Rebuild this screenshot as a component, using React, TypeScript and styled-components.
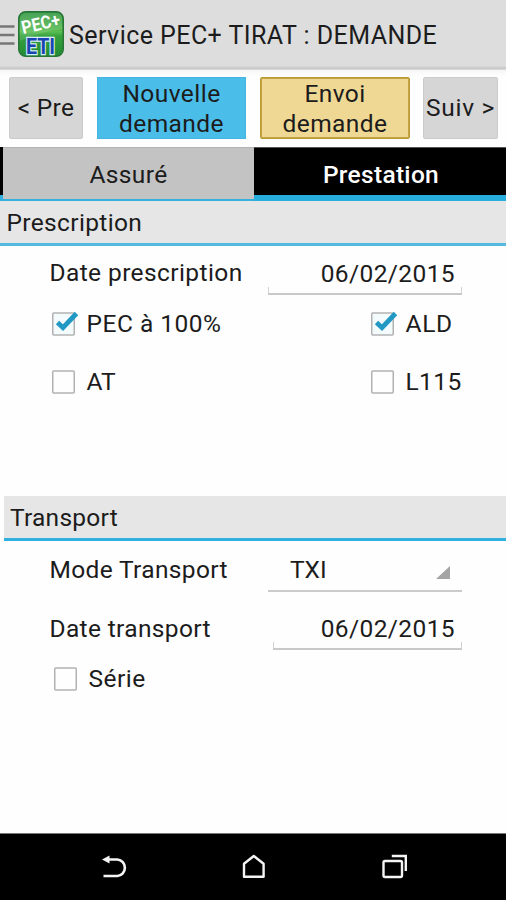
import React from 'react';
import styled, { createGlobalStyle, css } from 'styled-components';

const GlobalStyle = createGlobalStyle`
  * { box-sizing: border-box; }
  body { margin: 0; background: #fefefe; }
  button { font: inherit; color: inherit; margin: 0; }
`;

const Screen = styled.div`
  width: 506px;
  height: 900px;
  display: flex;
  flex-direction: column;
  overflow: hidden;
  background: #fefefe;
  color: #1c1c1c;
  font-family: Roboto, sans-serif;
  font-size: 24.5px;
  line-height: 30px;
  white-space: nowrap;
`;

const AppBar = styled.header`
  display: flex;
  align-items: center;
  flex: none;
  height: 70px;
  background: linear-gradient(#dddddd 66px, #cfcfcf 67px, #c9c9c9 69px, #e6e6e6 70px);
`;

const MenuIcon = styled.svg`
  display: block;
  flex: none;
  margin-right: 3px;
`;

const Logo = styled.svg`
  display: block;
  flex: none;
  margin-top: -2px;
  overflow: visible;
`;

const Text = styled.span<{ $spacing?: number }>`
  letter-spacing: ${({ $spacing = 0 }) => $spacing}px;
`;

const Title = styled.h1`
  margin: 1px 0 0 5px;
  font-size: 25px;
  font-weight: 400;
  letter-spacing: 0.44px;
`;

const Toolbar = styled.div`
  display: flex;
  flex: none;
  height: 77px;
  padding: 7px 8px 8px 9px;
  background: linear-gradient(#f6f6f6, #fefefe 6px);
`;

const ToolButton = styled.button<{ $tone?: 'blue' | 'gold'; $width: number; $gap?: number }>`
  flex: none;
  width: ${({ $width }) => $width}px;
  height: 62px;
  margin-left: ${({ $gap = 0 }) => $gap}px;
  padding: 0;
  border: 1px solid #cbcbcb;
  border-radius: 2px;
  background: #d6d6d6;
  white-space: normal;
  ${({ $tone }) => $tone === 'blue' && css`
    padding-top: 1px;
    background: #4abde8;
    border-color: #45b4df;
    border-radius: 0;
  `}
  ${({ $tone }) => $tone === 'gold' && css`
    padding-top: 1px;
    background: #eed894;
    border: 1px solid #b99a35;
    box-shadow: inset 0 0 0 1px #c2a443;
  `}
`;

const Tabs = styled.div`
  display: flex;
  flex: none;
  height: 54px;
  padding-left: 3px;
  background: linear-gradient(#000 0 48px, #2fb0dd 48px) no-repeat 0 0 / 3px 100%;
`;

const Tab = styled.button<{ $active?: boolean }>`
  flex: ${({ $active }) => ($active ? '1' : '0 0 251px')};
  padding: 4px 0 0;
  border: solid #36b0de;
  border-width: 0 0 2px;
  background: #c3c3c3;
  box-shadow: inset 0 1px #b4b4b4;
  ${({ $active }) => $active && css`
    background: #000;
    color: #fff;
    font-weight: 500;
    border-color: #27aedd;
    border-width: 0 0 6px;
    padding: 8px 0 0 2px;
    box-shadow: inset 0 1px #555;
  `}
`;

const SectionTitle = styled.h2<{ $inset?: boolean }>`
  flex: none;
  height: 45px;
  margin: ${({ $inset }) => ($inset ? '0 0 0 4px' : '0')};
  padding: 7px 0 0 ${({ $inset }) => ($inset ? 6 : 6.5)}px;
  border-bottom: 3px solid ${({ $inset }) => ($inset ? '#2fb0df' : '#55b8de')};
  background: #e6e6e6;
  font-size: inherit;
  font-weight: 400;
`;

const Panel = styled.section<{ $rows: string; $height: number }>`
  display: grid;
  flex: none;
  height: ${({ $height }) => $height}px;
  padding-left: 49.5px;
  grid-template-rows: ${({ $rows }) => $rows};
  align-content: start;
`;

const Row = styled.div`
  display: flex;
  align-items: center;
`;

const Label = styled.label<{ $spacing: number; $drop: number }>`
  width: 218.5px;
  padding-top: ${({ $drop }) => $drop}px;
  letter-spacing: ${({ $spacing }) => $spacing}px;
`;

const DateField = styled.div<{ $indent?: number }>`
  width: ${({ $indent = 0 }) => 194 - $indent}px;
  height: 40px;
  margin-left: ${({ $indent = 0 }) => $indent}px;
  align-self: end;
  padding: 4px 7px 0 0;
  text-align: right;
  letter-spacing: 0.4px;
  background:
    linear-gradient(#c9c9c9, #c9c9c9) 0 100% / 100% 2px no-repeat,
    linear-gradient(#d2d2d2, #d2d2d2) 0 100% / 1px 8px no-repeat,
    linear-gradient(#d2d2d2, #d2d2d2) 100% 100% / 1px 8px no-repeat;
`;

const Spinner = styled.div`
  display: flex;
  justify-content: space-between;
  align-self: end;
  width: 194px;
  height: 38px;
  padding: 1px 12px 0 22px;
  border-bottom: 2px solid #cbcbcb;
`;

const SpinnerArrow = styled.svg`
  display: block;
  margin-top: 11px;
`;

const CheckItem = styled.label<{ $width?: number; $shift?: number }>`
  display: flex;
  align-items: center;
  gap: 9px;
  width: ${({ $width }) => ($width ? `${$width}px` : 'auto')};
  margin-left: ${({ $shift = 0 }) => $shift}px;
`;

const BoxIcon = styled.svg`
  display: block;
  flex: none;
`;

const NavBar = styled.nav`
  display: flex;
  justify-content: space-between;
  align-items: center;
  flex: none;
  height: 67px;
  padding: 0 99px 0 101px;
  border-top: 1px solid #777;
  background: #000;
`;

function Checkbox({ checked = false }: { checked?: boolean }) {
  return (
    <BoxIcon width="28" height="26" viewBox="0 0 28 26">
      <rect x="2.75" y="2" width="21.5" height="22" rx="1" fill={checked ? '#f4fbfd' : '#fefefe'} stroke="#b2b2b2" strokeWidth="1.5" />
      {checked && <path d="M7.5 11.5L13 16.7L26.5 2.5" fill="none" stroke="#2299c5" strokeWidth="4.8" />}
    </BoxIcon>
  );
}

function AppLogo() {
  return (
    <Logo width="46" height="46" viewBox="0 0 46 46">
      <defs>
        <linearGradient id="green" x1="0" y1="0" x2="0" y2="1">
          <stop offset="0" stopColor="#2e9440" />
          <stop offset="0.45" stopColor="#59bd50" />
          <stop offset="0.55" stopColor="#35a03e" />
          <stop offset="1" stopColor="#238c35" />
        </linearGradient>
      </defs>
      <rect x="0.75" y="0.75" width="44.5" height="44.5" rx="7" fill="url(#green)" stroke="#287536" strokeWidth="1.5" />
      <path d="M2 8Q2 2 8 2H38Q44 2 44 8V18Q25 20 2 30Z" fill="#fff" opacity="0.12" />
      <g fontFamily="Roboto, sans-serif" fontWeight="700">
        <text x="5" y="23" fontSize="18" fill="#fff" textLength="39" lengthAdjust="spacingAndGlyphs" transform="rotate(-13 5 23)">PEC+</text>
        <text x="8" y="42.5" fontSize="21.5" fill="#1744b0" stroke="#d5edf7" strokeWidth="2.4" paintOrder="stroke" textLength="29" lengthAdjust="spacingAndGlyphs">ETI</text>
      </g>
    </Logo>
  );
}

export default function App() {
  return (
    <>
      <GlobalStyle />
      <Screen>
        <AppBar>
          <MenuIcon width="15" height="24" viewBox="0 0 15 24">
            <path d="M0 3.5H14.5M0 12H14.5M0 20.5H14.5" stroke="#777" strokeWidth="2.6" />
          </MenuIcon>
          <AppLogo />
          <Title>Service PEC+ TIRAT : DEMANDE</Title>
        </AppBar>

        <Toolbar>
          <ToolButton $width={74}><Text $spacing={0.3}>&lt; Pre</Text></ToolButton>
          <ToolButton $tone="blue" $width={149} $gap={14}><Text $spacing={0.45}>Nouvelle demande</Text></ToolButton>
          <ToolButton $tone="gold" $width={150} $gap={14}><Text $spacing={0.4}>Envoi demande</Text></ToolButton>
          <ToolButton $width={75} $gap={13}><Text $spacing={0.7}>Suiv &gt;</Text></ToolButton>
        </Toolbar>

        <Tabs>
          <Tab><Text $spacing={0.4}>Assuré</Text></Tab>
          <Tab $active><Text $spacing={0.3}>Prestation</Text></Tab>
        </Tabs>

        <SectionTitle><Text $spacing={0.35}>Prescription</Text></SectionTitle>
        <Panel $rows="49px 58px 58px" $height={250}>
          <Row>
            <Label $spacing={0.4} $drop={5}>Date prescription</Label>
            <DateField>06/02/2015</DateField>
          </Row>
          <Row>
            <CheckItem $width={319}><Checkbox checked /><Text $spacing={0.5}>PEC à 100%</Text></CheckItem>
            <CheckItem><Checkbox checked /><Text $spacing={0.7}>ALD</Text></CheckItem>
          </Row>
          <Row>
            <CheckItem $width={319}><Checkbox /><Text>AT</Text></CheckItem>
            <CheckItem><Checkbox /><Text $spacing={0.4}>L115</Text></CheckItem>
          </Row>
        </Panel>

        <SectionTitle $inset><Text $spacing={0.25}>Transport</Text></SectionTitle>
        <Panel $rows="51px 58px 58px" $height={292}>
          <Row>
            <Label $spacing={0.35} $drop={6}>Mode Transport</Label>
            <Spinner>
              <Text>TXI</Text>
              <SpinnerArrow width="14" height="14" viewBox="0 0 14 14"><path d="M14 0V13H0Z" fill="#a5a5a5" /></SpinnerArrow>
            </Spinner>
          </Row>
          <Row>
            <Label $spacing={0.35} $drop={16}>Date transport</Label>
            <DateField $indent={5}>06/02/2015</DateField>
          </Row>
          <Row>
            <CheckItem $shift={2}><Checkbox /><Text $spacing={0.5}>Série</Text></CheckItem>
          </Row>
        </Panel>

        <NavBar>
          <svg width="27" height="26" viewBox="0 0 27 26" fill="none" stroke="#f5f5f5" strokeWidth="2.6">
            <path d="M7 5.5H16.5A8.3 8.3 0 0 1 16.5 22H2.5" />
            <path d="M1 5.5L8.5 1.5V9.5Z" fill="#f5f5f5" stroke="none" />
          </svg>
          <svg width="26" height="26" viewBox="0 0 26 26" fill="none" stroke="#f5f5f5" strokeWidth="2.4" strokeLinejoin="round">
            <path d="M2 9.8L11.8 2L21.6 9.8V22.8H2Z" />
          </svg>
          <svg width="26" height="26" viewBox="0 0 26 26" fill="none" stroke="#f5f5f5" strokeWidth="2.4">
            <rect x="2.5" y="7" width="18.5" height="16" rx="1.5" />
            <path d="M10.8 2H24.8V17" />
          </svg>
        </NavBar>
      </Screen>
    </>
  );
}
